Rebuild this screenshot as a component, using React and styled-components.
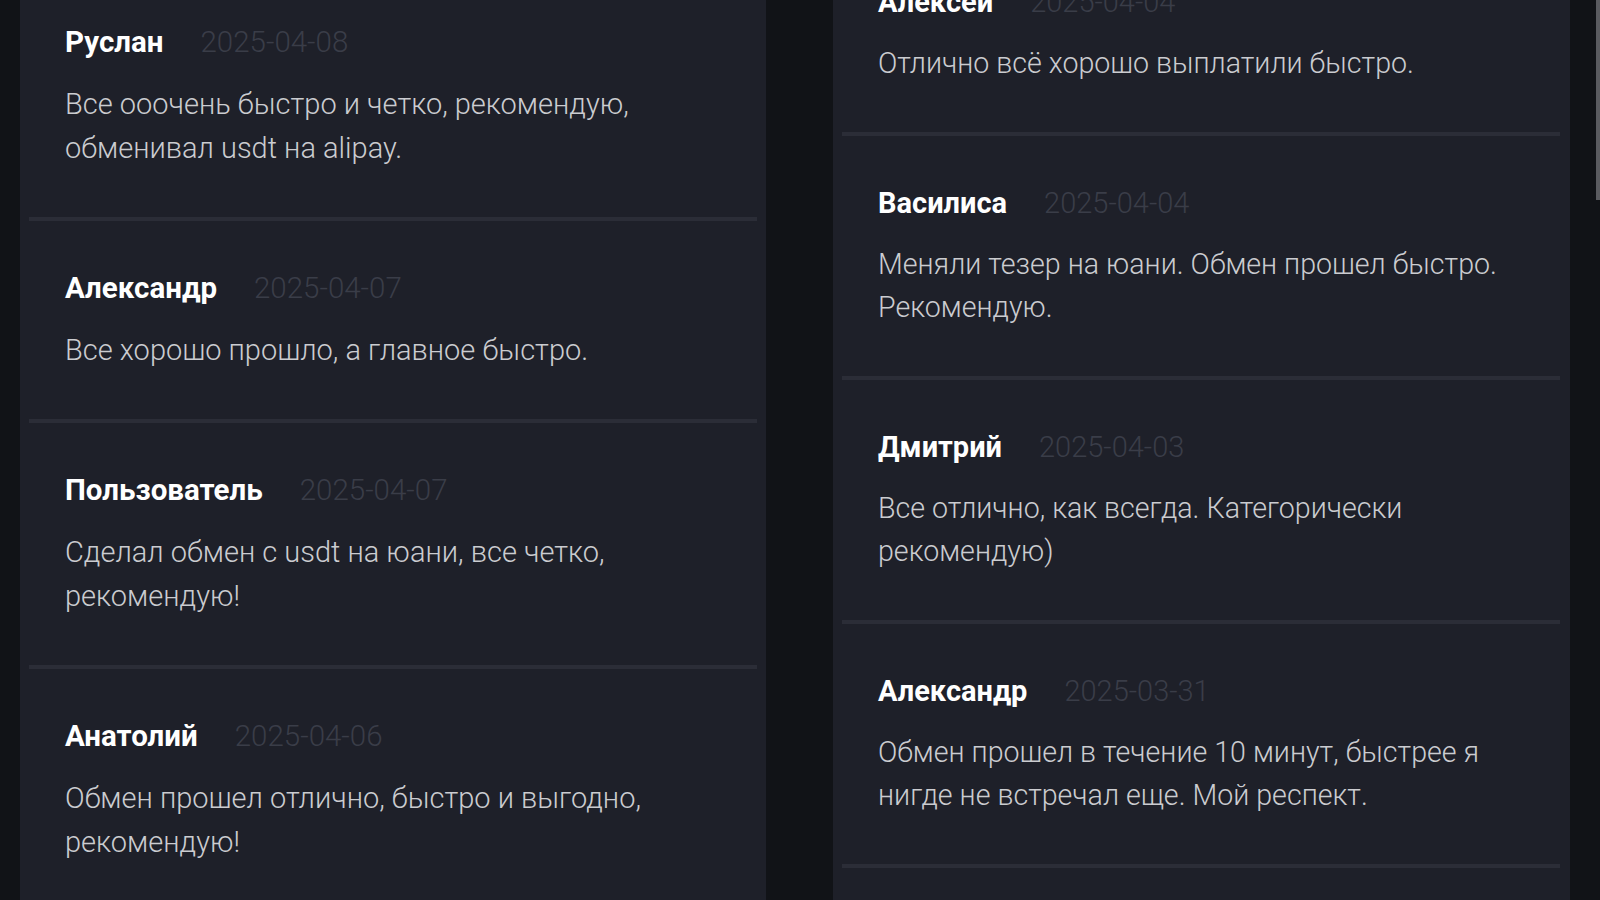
import React from 'react';
import styled, { createGlobalStyle } from 'styled-components';

const GlobalStyle = createGlobalStyle`
    html, body {
        margin: 0;
        padding: 0;
        height: 100%;
        overflow: hidden;
        background: #111317;
        font-family: Roboto, "Noto Sans", "Liberation Sans", sans-serif;
    }
    #root {
        height: 100%;
    }
`;

const Page = styled.div`
    position: relative;
    display: grid;
    grid-template-columns: 746px 737px;
    column-gap: 67px;
    height: 100vh;
    padding-left: 20px;
    box-sizing: border-box;
    overflow: hidden;
`;

const Panel = styled.section`
    background: #1e2029;
    padding: 0 ${(p) => p.$padRight}px 0 9px;
    height: 100vh;
    overflow: hidden;
`;

const List = styled.div`
    display: flex;
    flex-direction: column;
    margin-top: ${(p) => p.$offset}px;
`;

const Review = styled.article`
    padding: 45px 36px 47px;
    border-bottom: 4px solid #2b2d37;
`;

const Head = styled.div`
    display: flex;
    align-items: baseline;
    gap: 37px;
    line-height: 44px;
`;

const Name = styled.span`
    font-size: ${(p) => p.$size}px;
    font-weight: 700;
    color: #ffffff;
`;

const Date = styled.span`
    font-family: "Roboto Light", Roboto, sans-serif;
    font-size: ${(p) => p.$size}px;
    font-weight: 300;
    color: #3a3d48;
`;

const Text = styled.p`
    margin: 18px 0 0;
    font-family: "Roboto Light", Roboto, sans-serif;
    font-size: ${(p) => p.$size}px;
    font-weight: 300;
    line-height: ${(p) => p.$line}px;
    color: #cbccd0;
`;

const ScrollThumb = styled.div`
    position: absolute;
    top: 0;
    right: 0;
    width: 4px;
    height: 200px;
    background: #5a5b60;
`;

const left = [
    { name: 'Руслан', date: '2025-04-08', text: 'Все ооочень быстро и четко, рекомендую, обменивал usdt на alipay.' },
    { name: 'Александр', date: '2025-04-07', text: 'Все хорошо прошло, а главное быстро.' },
    { name: 'Пользователь', date: '2025-04-07', text: 'Сделал обмен с usdt на юани, все четко, рекомендую!' },
    { name: 'Анатолий', date: '2025-04-06', text: 'Обмен прошел отлично, быстро и выгодно, рекомендую!' },
];

const right = [
    { name: 'Алексей', date: '2025-04-04', text: 'Отлично всё хорошо выплатили быстро.' },
    { name: 'Василиса', date: '2025-04-04', text: 'Меняли тезер на юани. Обмен прошел быстро. Рекомендую.' },
    { name: 'Дмитрий', date: '2025-04-03', text: 'Все отлично, как всегда. Категорически рекомендую)' },
    { name: 'Александр', date: '2025-03-31', text: 'Обмен прошел в течение 10 минут, быстрее я нигде не встречал еще. Мой респект.' },
];

const leftType = { name: 29.5, date: 29.5, text: 29, line: 44 };
const rightType = { name: 29, date: 29, text: 28.6, line: 43 };

const Column = ({ items, offset, padRight, type }) => (
    <Panel $padRight={padRight}>
        <List $offset={offset}>
            {items.map((r, i) => (
                <Review key={i}>
                    <Head>
                        <Name $size={type.name}>{r.name}</Name>
                        <Date $size={type.date}>{r.date}</Date>
                    </Head>
                    <Text $size={type.text} $line={type.line}>{r.text}</Text>
                </Review>
            ))}
        </List>
    </Panel>
);

const App = () => (
    <>
        <GlobalStyle />
        <Page>
            <Column items={left} offset={-25} padRight={9} type={leftType} />
            <Column items={right} offset={-65} padRight={10} type={rightType} />
            <ScrollThumb />
        </Page>
    </>
);

export default App;
